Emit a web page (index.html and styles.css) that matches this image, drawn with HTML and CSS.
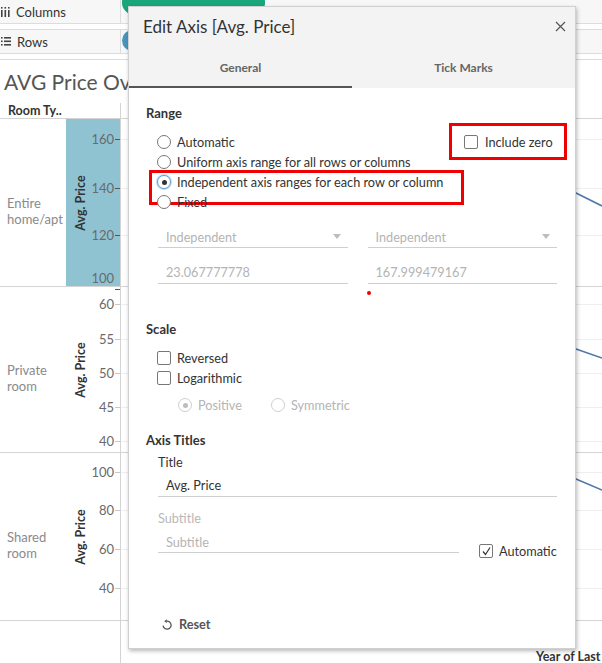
FILE: index.html
```html
<!DOCTYPE html>
<html>
<head>
<meta charset="utf-8">
<title>Edit Axis</title>
<link rel="stylesheet" href="styles.css">
</head>
<body>
<div class="app">
  <div class="shelves">
    <div class="shelf shelf-cols">
      <div class="shelf-label">
        <svg class="shelf-icon" width="9" height="10" viewBox="0 0 9 10"><g fill="#444"><rect x="0" y="0" width="1.6" height="1.6"/><rect x="0" y="3" width="1.6" height="7"/><rect x="3.5" y="0" width="1.6" height="1.6"/><rect x="3.5" y="3" width="1.6" height="7"/><rect x="7" y="0" width="1.6" height="1.6"/><rect x="7" y="3" width="1.6" height="7"/></g></svg>
        <span>Columns</span>
      </div>
      <div class="shelf-drop"><span class="pill pill-green"></span></div>
    </div>
    <div class="shelf shelf-rows">
      <div class="shelf-label">
        <svg class="shelf-icon" width="10" height="9" viewBox="0 0 10 9"><g fill="#444"><rect x="0" y="0" width="1.6" height="1.6"/><rect x="3" y="0" width="7" height="1.6"/><rect x="0" y="3.5" width="1.6" height="1.6"/><rect x="3" y="3.5" width="7" height="1.6"/><rect x="0" y="7" width="1.6" height="1.6"/><rect x="3" y="7" width="7" height="1.6"/></g></svg>
        <span>Rows</span>
      </div>
      <div class="shelf-drop"><span class="pill pill-blue"></span></div>
    </div>
  </div>

  <div class="view">
    <h1 class="sheet-title">AVG Price Over Time</h1>
    <div class="header-row">
      <div class="hdr-cell">Room Ty..</div>
      <div class="hdr-plot"></div>
    </div>

    <div class="panel panel-1">
      <div class="rowlabel">Entire<br>home/apt</div>
      <div class="axis axis-selected">
        <span class="axis-title">Avg. Price</span>
        <span class="tick" style="top:12px"><span class="tick-label">160</span><span class="tick-mark"></span></span>
        <span class="tick" style="top:61px"><span class="tick-label">140</span><span class="tick-mark"></span></span>
        <span class="tick" style="top:108px"><span class="tick-label">120</span><span class="tick-mark"></span></span>
        <span class="tick tick-bottom" style="top:151px"><span class="tick-label">100</span><span class="tick-mark"></span></span>
      </div>
      <div class="plot">
        <span class="grid" style="top:20px"></span>
        <span class="grid" style="top:69px"></span>
        <span class="grid" style="top:116px"></span>
        <svg class="series" width="481" height="167" viewBox="0 0 481 167"><polyline points="300,10 380,40 455,74 481,87" fill="none" stroke="#4e79a7" stroke-width="1.6"/></svg>
      </div>
    </div>

    <div class="panel panel-2">
      <div class="rowlabel">Private<br>room</div>
      <div class="axis">
        <span class="axis-title">Avg. Price</span>
        <span class="tick" style="top:9px"><span class="tick-label">60</span><span class="tick-mark"></span></span>
        <span class="tick" style="top:44px"><span class="tick-label">55</span><span class="tick-mark"></span></span>
        <span class="tick" style="top:78px"><span class="tick-label">50</span><span class="tick-mark"></span></span>
        <span class="tick" style="top:112px"><span class="tick-label">45</span><span class="tick-mark"></span></span>
        <span class="tick" style="top:146px"><span class="tick-label">40</span><span class="tick-mark"></span></span>
      </div>
      <div class="plot">
        <span class="grid" style="top:17px"></span>
        <span class="grid" style="top:52px"></span>
        <span class="grid" style="top:86px"></span>
        <span class="grid" style="top:120px"></span>
        <span class="grid" style="top:154px"></span>
        <svg class="series" width="481" height="165" viewBox="0 0 481 165"><polyline points="320,30 400,45 455,62 481,71" fill="none" stroke="#4e79a7" stroke-width="1.6"/></svg>
      </div>
    </div>

    <div class="panel panel-3">
      <div class="rowlabel">Shared<br>room</div>
      <div class="axis">
        <span class="axis-title">Avg. Price</span>
        <span class="tick" style="top:11px"><span class="tick-label">100</span><span class="tick-mark"></span></span>
        <span class="tick" style="top:49px"><span class="tick-label">80</span><span class="tick-mark"></span></span>
        <span class="tick" style="top:88px"><span class="tick-label">60</span><span class="tick-mark"></span></span>
        <span class="tick" style="top:127px"><span class="tick-label">40</span><span class="tick-mark"></span></span>
      </div>
      <div class="plot">
        <span class="grid" style="top:19px"></span>
        <span class="grid" style="top:57px"></span>
        <span class="grid" style="top:96px"></span>
        <span class="grid" style="top:135px"></span>
        <svg class="series" width="481" height="167" viewBox="0 0 481 167"><polyline points="330,0 400,10 455,26 481,37" fill="none" stroke="#4e79a7" stroke-width="1.6"/></svg>
      </div>
    </div>

    <div class="footer-row">
      <div class="footer-left"></div>
      <div class="footer-plot"><span class="x-title">Year of Last</span></div>
    </div>
  </div>

  <div class="dialog">
    <div class="dlg-head">
      <div class="dlg-title-row">
        <span class="dlg-title">Edit Axis [Avg. Price]</span>
        <svg class="dlg-close" width="11" height="11" viewBox="0 0 11 11"><path d="M1 1 L10 10 M10 1 L1 10" stroke="#555" stroke-width="1.2" fill="none"/></svg>
      </div>
      <div class="tabs">
        <div class="tab tab-active">General</div>
        <div class="tab">Tick Marks</div>
      </div>
    </div>

    <div class="dlg-body">
      <div class="sec-title">Range</div>
      <div class="range">
        <div class="options">
          <div class="opt"><span class="radio"></span><span>Automatic</span></div>
          <div class="opt"><span class="radio"></span><span>Uniform axis range for all rows or columns</span></div>
          <div class="opt opt-hl"><span class="radio radio-on"></span><span>Independent axis ranges for each row or column</span></div>
          <div class="opt"><span class="radio"></span><span>Fixed</span></div>
        </div>
        <div class="include-zero"><span class="check"></span><span>Include zero</span></div>
      </div>

      <div class="field-row field-row-sel">
        <div class="field field-disabled"><span>Independent</span><span class="caret"></span></div>
        <div class="field field-disabled"><span>Independent</span><span class="caret"></span></div>
      </div>
      <div class="field-row field-row-num">
        <div class="field field-disabled"><span>23.067777778</span></div>
        <div class="field field-disabled"><span>167.999479167</span></div>
        <span class="red-dot"></span>
      </div>

      <div class="sec-title sec-scale">Scale</div>
      <div class="checks">
        <div class="opt"><span class="check"></span><span>Reversed</span></div>
        <div class="opt"><span class="check"></span><span>Logarithmic</span></div>
      </div>
      <div class="subopts">
        <div class="opt opt-disabled"><span class="radio radio-dis-on"></span><span>Positive</span></div>
        <div class="opt opt-disabled"><span class="radio radio-dis"></span><span>Symmetric</span></div>
      </div>

      <div class="sec-title sec-axis">Axis Titles</div>
      <div class="sub-label">Title</div>
      <div class="field field-full"><span>Avg. Price</span></div>
      <div class="sub-label sub-label-dis">Subtitle</div>
      <div class="subtitle-row">
        <div class="field field-sub field-disabled"><span>Subtitle</span></div>
        <div class="opt auto-opt"><span class="check check-on"><svg width="11" height="11" viewBox="0 0 11 11"><path d="M2 5.5 L4.5 8.5 L9 1.5" fill="none" stroke="#333" stroke-width="1.2"/></svg></span><span>Automatic</span></div>
      </div>

      <div class="reset">
        <svg width="10" height="11" viewBox="0 0 10 11"><path d="M4.6 2.2 A4 4 0 1 1 1.1 6.6" fill="none" stroke="#555" stroke-width="1.3"/><path d="M2.2 2.2 L4.8 0.3 L4.8 4.1 Z" fill="#555"/></svg>
        <span>Reset</span>
      </div>
    </div>
  </div>
</div>
</body>
</html>
```

FILE: styles.css
```css
* { box-sizing: border-box; }
html, body { margin: 0; padding: 0; }
body {
  font-family: "Lato", "Liberation Sans", sans-serif;
  color: #333;
  background: #fff;
}
.app {
  position: relative;
  width: 602px;
  height: 663px;
  overflow: hidden;
  background: #fff;
}

/* ---------- shelves ---------- */
.shelf {
  display: flex;
  height: 25px;
  border-top: 1px solid #dcdcdc;
  border-bottom: 1px solid #dcdcdc;
  background: #f7f7f7;
}
.shelf-cols { margin-top: -1px; margin-bottom: 5px; }
.shelf-rows { margin-bottom: 5px; }
.shelf-label {
  width: 121px;
  display: flex;
  align-items: center;
  gap: 6px;
  padding-left: 1px;
  border-right: 1px solid #dcdcdc;
  font-size: 13px;
  color: #333;
}
.shelf-drop {
  flex: 1;
  display: flex;
  align-items: flex-start;
  padding-left: 1px;
}
.pill { display: block; border-radius: 11px; }
.pill-green { width: 143px; height: 23px; margin-top: -9px; background: #1aa57b; }
.pill-blue { width: 140px; height: 21px; background: #4a95bb; }

/* ---------- view ---------- */
.view { border-top: 1px solid #dcdcdc; }
.sheet-title {
  margin: 0;
  height: 43px;
  padding: 9px 0 0 4px;
  font-size: 21px;
  line-height: 26px;
  font-weight: 400;
  color: #555;
  white-space: nowrap;
}
.header-row {
  display: flex;
  height: 16px;
  border-bottom: 1px solid #d4d4d4;
}
.hdr-cell {
  width: 121px;
  border-right: 1px solid #d4d4d4;
  padding-left: 8px;
  font-size: 12.5px;
  font-weight: 700;
  line-height: 15px;
  color: #333;
}
.hdr-plot { flex: 1; }

.panel {
  display: flex;
  border-bottom: 1px solid #d4d4d4;
}
.panel-1 { height: 168px; }
.panel-2 { height: 166px; }
.panel-3 { height: 168px; }

.rowlabel {
  width: 66px;
  display: flex;
  align-items: center;
  padding: 16px 0 0 7px;
  font-size: 13px;
  line-height: 16px;
  color: #8a8a8a;
}
.axis {
  position: relative;
  width: 55px;
  border-right: 1px solid #d4d4d4;
}
.axis-selected { background: #8fc3d2; }
.axis-title {
  position: absolute;
  left: 7px;
  top: 50%;
  writing-mode: vertical-rl;
  transform: translateY(-50%) rotate(180deg);
  font-size: 12.5px;
  font-weight: 700;
  line-height: 15px;
  color: #333;
  white-space: nowrap;
}
.tick {
  position: absolute;
  right: 0;
  height: 16px;
  display: flex;
  align-items: center;
}
.tick-label {
  font-size: 13px;
  line-height: 16px;
  color: #6a6a6a;
}
.tick-mark {
  display: block;
  width: 5px;
  height: 1px;
  margin-left: 1px;
  background: #c8c8c8;
}
.axis-selected .tick-mark { background: #555; }
.tick-bottom .tick-mark { align-self: flex-end; margin-bottom: -4px; }

.plot { position: relative; flex: 1; }
.grid {
  position: absolute;
  left: 0;
  right: 0;
  height: 1px;
  background: #efefef;
}
.series { position: absolute; left: 0; top: 0; }

.footer-row { display: flex; height: 43px; }
.footer-left { width: 121px; border-right: 1px solid #d4d4d4; }
.footer-plot {
  flex: 1;
  padding: 24px 0 0 415px;
  white-space: nowrap;
  overflow: hidden;
}
.x-title { font-size: 12.5px; font-weight: 700; line-height: 16px; color: #333; }

/* ---------- dialog ---------- */
.dialog {
  position: absolute;
  left: 128px;
  top: 6px;
  width: 448px;
  height: 643px;
  display: flex;
  flex-direction: column;
  background: #fff;
  border: 1px solid #d0d0d0;
  box-shadow: 1px 2px 4px rgba(0, 0, 0, 0.28);
}
.dlg-head { background: #f3f3f3; height: 81px; }
.dlg-title-row {
  height: 41px;
  display: flex;
  align-items: flex-start;
  justify-content: space-between;
  padding: 10px 9px 0 14px;
}
.dlg-title {
  font-size: 17px;
  line-height: 20px;
  color: #333;
}
.dlg-close { margin-top: 4px; }
.tabs { display: flex; height: 40px; }
.tab {
  flex: 1;
  display: flex;
  align-items: center;
  justify-content: center;
  font-size: 12px;
  font-weight: 700;
  color: #666;
  border-bottom: 2px solid transparent;
}
.tab-active { border-bottom-color: #555; }

.dlg-body {
  flex: 1;
  display: flex;
  flex-direction: column;
  padding: 0 18px 16px 17px;
  font-size: 12.7px;
  color: #333;
}
.sec-title {
  margin-top: 17px;
  font-size: 13px;
  font-weight: 700;
  line-height: 16px;
  color: #333;
}
.sec-scale { margin-top: 37px; }
.sec-axis { margin-top: 17px; }

.range {
  display: flex;
  align-items: flex-start;
  margin-top: 11px;
}
.options { flex: 1; padding-left: 11px; }
.opt {
  position: relative;
  display: flex;
  align-items: center;
  gap: 6px;
  height: 20px;
  line-height: 16px;
  white-space: nowrap;
}
.opt-hl::after {
  content: "";
  position: absolute;
  left: -8px;
  top: -2px;
  width: 309px;
  height: 29px;
  border: 3px solid #f00000;
}
.radio {
  position: relative;
  display: block;
  flex: none;
  width: 14px;
  height: 14px;
  border: 1px solid #777;
  border-radius: 50%;
  background: #fff;
}
.radio-on {
  border-color: #5d9bd6;
  box-shadow: 0 0 0 1px #c3dcf3;
}
.radio-on::after,
.radio-dis-on::after {
  content: "";
  position: absolute;
  left: 3.5px;
  top: 3.5px;
  width: 5px;
  height: 5px;
  border-radius: 50%;
  background: #333;
}
.radio-dis, .radio-dis-on { border-color: #cfcfcf; }
.radio-dis-on::after { background: #bdbdbd; }

.check {
  display: flex;
  align-items: center;
  justify-content: center;
  flex: none;
  width: 14px;
  height: 14px;
  border: 1px solid #777;
  border-radius: 2px;
  background: #fff;
}

.include-zero {
  display: flex;
  align-items: center;
  gap: 7px;
  width: 118px;
  height: 37px;
  margin-top: -9px;
  margin-right: -10px;
  padding-left: 12px;
  border: 3px solid #f00000;
  white-space: nowrap;
}

.field-row {
  position: relative;
  display: grid;
  grid-template-columns: 1fr 1fr;
  column-gap: 20px;
  margin-left: 12px;
}
.field-row-sel { margin-top: 14px; }
.field-row-num { margin-top: 13px; }
.field {
  display: flex;
  align-items: center;
  justify-content: space-between;
  height: 22px;
  padding: 0 7px 0 8px;
  border-bottom: 1px solid #cfcfcf;
  line-height: 16px;
  white-space: nowrap;
}
.field-row-num .field { height: 23px; }
.field-disabled { color: #b4b4b4; }
.caret {
  width: 0;
  height: 0;
  border-left: 4px solid transparent;
  border-right: 4px solid transparent;
  border-top: 5px solid #bdbdbd;
}
.red-dot {
  position: absolute;
  left: 209px;
  top: 30px;
  width: 4px;
  height: 4px;
  border-radius: 50%;
  background: #f00000;
}

.checks { margin-top: 11px; padding-left: 11px; }
.subopts {
  display: flex;
  gap: 0;
  margin-top: 7px;
  padding-left: 32px;
}
.subopts .opt:first-child { width: 93px; }
.opt-disabled { color: #b4b4b4; }

.sub-label {
  margin-top: 6px;
  margin-left: 12px;
  line-height: 16px;
  color: #333;
}
.sub-label-dis { margin-top: 13px; color: #b8b8b8; }
.field-full { margin-top: 4px; margin-left: 12px; height: 23px; color: #333; }

.subtitle-row {
  display: flex;
  align-items: flex-end;
  margin-top: 5px;
  margin-left: 12px;
}
.field-sub { width: 301px; }
.auto-opt { margin-left: 20px; height: 18px; align-items: center; margin-bottom: -7px; }
.check-on svg { display: block; }

.reset {
  display: flex;
  align-items: center;
  gap: 7px;
  margin-top: auto;
  padding-left: 16px;
  height: 16px;
  font-weight: 700;
  color: #555;
}
.reset svg { display: block; }
```
